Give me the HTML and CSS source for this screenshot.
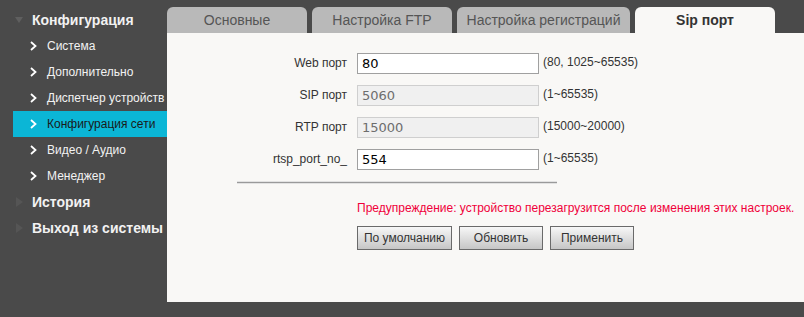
FILE: index.html
```html
<!DOCTYPE html>
<html lang="ru">
<head>
    <meta charset="UTF-8">
    <title>Sip порт</title>
    <link rel="stylesheet" href="styles.css">
</head>
<body>
<div class="page">
    <aside class="sidebar">
        <div class="group"><span class="tri tri-down"></span>Конфигурация</div>
        <ul class="submenu">
            <li><svg class="chev" viewBox="0 0 7 10"><polyline points="1,1 5.5,5 1,9"/></svg>Система</li>
            <li><svg class="chev" viewBox="0 0 7 10"><polyline points="1,1 5.5,5 1,9"/></svg>Дополнительно</li>
            <li><svg class="chev" viewBox="0 0 7 10"><polyline points="1,1 5.5,5 1,9"/></svg>Диспетчер устройств</li>
            <li class="active"><svg class="chev" viewBox="0 0 7 10"><polyline points="1,1 5.5,5 1,9"/></svg>Конфигурация сети</li>
            <li><svg class="chev" viewBox="0 0 7 10"><polyline points="1,1 5.5,5 1,9"/></svg>Видео / Аудио</li>
            <li><svg class="chev" viewBox="0 0 7 10"><polyline points="1,1 5.5,5 1,9"/></svg>Менеджер</li>
        </ul>
        <div class="group"><span class="tri tri-right"></span>История</div>
        <div class="group"><span class="tri tri-right"></span>Выход из системы</div>
    </aside>

    <main class="main">
        <div class="tabs">
            <div class="tab">Основные</div>
            <div class="tab">Настройка FTP</div>
            <div class="tab tab-wide">Настройка регистраций</div>
            <div class="tab current">Sip порт</div>
        </div>

        <div class="panel">
            <form class="form">
                <div class="row">
                    <label for="webPort">Web порт</label>
                    <input type="text" id="webPort" value="80">
                    <span class="hint">(80, 1025~65535)</span>
                </div>
                <div class="row">
                    <label for="sipPort">SIP порт</label>
                    <input type="text" id="sipPort" value="5060" disabled>
                    <span class="hint">(1~65535)</span>
                </div>
                <div class="row">
                    <label for="rtpPort">RTP порт</label>
                    <input type="text" id="rtpPort" value="15000" disabled>
                    <span class="hint">(15000~20000)</span>
                </div>
                <div class="row">
                    <label for="rtspPort">rtsp_port_no_</label>
                    <input type="text" id="rtspPort" value="554">
                    <span class="hint">(1~65535)</span>
                </div>

                <div class="divider"></div>

                <p class="warn">Предупреждение: устройство перезагрузится после изменения этих настроек.</p>

                <div class="buttons">
                    <button type="button" class="btn btn-default">По умолчанию</button>
                    <button type="button" class="btn">Обновить</button>
                    <button type="button" class="btn">Применить</button>
                </div>
            </form>
        </div>
    </main>
</div>
</body>
</html>
```

FILE: styles.css
```css
body {
    margin: 0;
    padding: 0;
    background-color: #4a4a4a;
    font-family: "Liberation Sans", Arial, sans-serif;
}
.page {
    display: flex;
    height: 317px;
}

/* меню слева */
.sidebar {
    width: 167px;
    padding-top: 7px;
    flex-shrink: 0;
}
.group {
    display: flex;
    align-items: center;
    height: 26px;
    padding-left: 15px;
    color: #f2f2f2;
    font-size: 14px;
    font-weight: bold;
    white-space: nowrap;
}
.tri {
    width: 0;
    height: 0;
    margin-right: 9px;
}
.tri-down {
    border-left: 4px solid transparent;
    border-right: 4px solid transparent;
    border-top: 6px solid #5f5f5f;
}
.tri-right {
    border-top: 5px solid transparent;
    border-bottom: 5px solid transparent;
    border-left: 7px solid #555;
    margin-left: 1px;
}
.submenu {
    list-style: none;
    margin: 0;
    padding: 0;
}
.submenu li {
    display: flex;
    align-items: center;
    height: 26px;
    margin-left: 13px;
    padding-left: 17px;
    color: #f2f2f2;
    font-size: 12px;
    white-space: nowrap;
}
.submenu li.active {
    background-color: #0bb6d6;
    color: #1a1a1a;
}
.chev {
    width: 7px;
    height: 10px;
    margin-right: 10px;
    fill: none;
    stroke: #fff;
    stroke-width: 1.8;
}

/* вкладки */
.main {
    flex: 1;
    display: flex;
    flex-direction: column;
    padding-top: 7px;
    padding-bottom: 15px;
}
.tabs {
    display: flex;
    gap: 5px;
    height: 26px;
}
.tab {
    width: 140px;
    background-color: #b9b9b9;
    border-radius: 6px 6px 0 0;
    color: #555;
    font-size: 14px;
    text-align: center;
    line-height: 26px;
}
.tab-wide {
    width: 173px;
}
.tab.current {
    background-color: #f9f8f6;
    color: #333;
    font-weight: bold;
}

/* панель */
.panel {
    flex: 1;
    background-color: #f9f8f6;
    padding-top: 20px;
}
.form {
    display: flex;
    flex-direction: column;
}
.row {
    display: flex;
    align-items: flex-start;
    height: 21px;
    margin-bottom: 11px;
}
.row label {
    width: 180px;
    margin-right: 10px;
    text-align: right;
    font-size: 12px;
    color: #333;
    line-height: 21px;
}
.row input {
    box-sizing: border-box;
    width: 182px;
    height: 21px;
    margin: 0;
    padding: 0 4px;
    border: 1px solid #a0a0a0;
    background-color: #fff;
    font-family: "DejaVu Sans", Verdana, sans-serif;
    font-size: 13px;
    color: #000;
}
.row input:disabled {
    background-color: #f0f0f0;
    border-color: #cfcfcf;
    color: #6d6d6d;
}
.hint {
    margin-left: 4px;
    font-size: 12px;
    color: #333;
    line-height: 18px;
}
.divider {
    width: 320px;
    height: 1px;
    margin: 0 0 0 70px;
    background-color: #9a9a9a;
    border-top: 1px solid #e2e2e2;
    border-bottom: 1px solid #e2e2e2;
}
.warn {
    margin: 17px 0 0 190px;
    font-size: 12px;
    line-height: 14px;
    color: #f0003a;
}
.buttons {
    display: flex;
    gap: 7px;
    margin: 11px 0 0 190px;
}
.btn {
    width: 84px;
    height: 24px;
    padding: 0;
    border: 1px solid #6a6a6a;
    background: linear-gradient(#f7f7f7, #c6c6c6);
    font-family: "Liberation Sans", Arial, sans-serif;
    font-size: 12px;
    color: #333;
}
.btn-default {
    width: 95px;
}
```
